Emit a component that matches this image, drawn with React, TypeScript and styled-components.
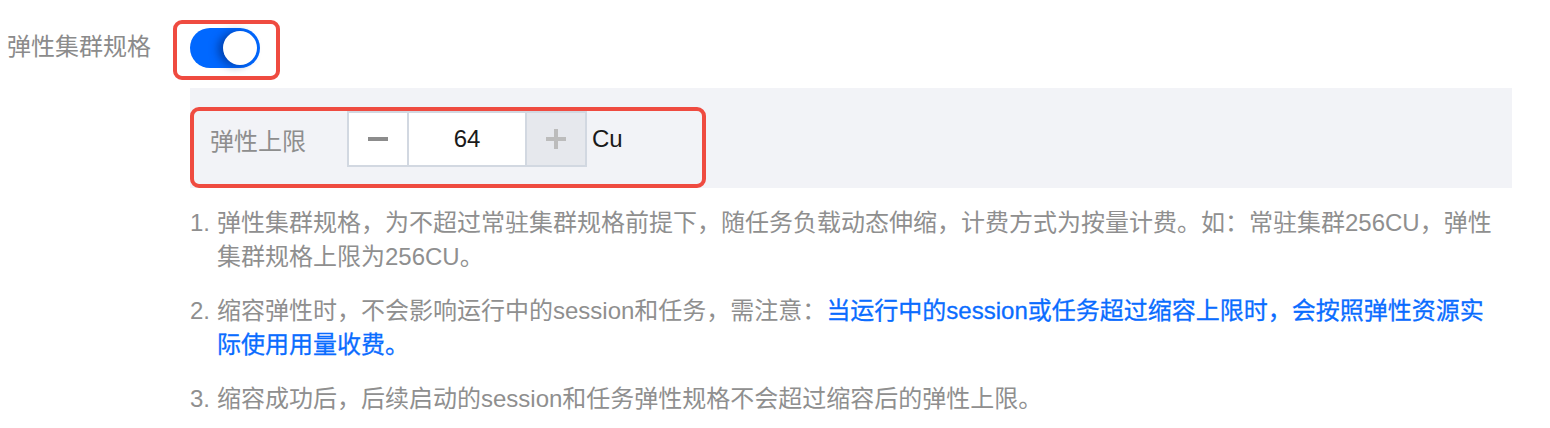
import React, { useState } from 'react';
import styled, { createGlobalStyle } from 'styled-components';

const GlobalStyle = createGlobalStyle`
  html, body {
    margin: 0;
    padding: 0;
    background: #ffffff;
  }
  body {
    font-family: "Liberation Sans", "Noto Sans CJK SC", sans-serif;
  }
`;

interface NotePart {
    text: string;
    highlight?: boolean;
    breakAfter?: boolean;
}

const notes: NotePart[][] = [
    [
        {
            text: '弹性集群规格，为不超过常驻集群规格前提下，随任务负载动态伸缩，计费方式为按量计费。如：常驻集群256CU，弹性',
            breakAfter: true,
        },
        { text: '集群规格上限为256CU。' },
    ],
    [
        { text: '缩容弹性时，不会影响运行中的session和任务，需注意：' },
        { text: '当运行中的session或任务超过缩容上限时，会按照弹性资源实', highlight: true, breakAfter: true },
        { text: '际使用用量收费。', highlight: true },
    ],
    [{ text: '缩容成功后，后续启动的session和任务弹性规格不会超过缩容后的弹性上限。' }],
];

const ElasticSpec: React.FC = () => {
    const [enabled, setEnabled] = useState(true);
    const [limit, setLimit] = useState(64);
    const max = 64;

    return (
        <Page>
            <GlobalStyle />
            <TopRow>
                <FieldLabel>弹性集群规格</FieldLabel>
                <Highlight $pad="4px 16px 8px 13px">
                    <Toggle $on={enabled} onClick={() => setEnabled((v) => !v)}>
                        <Knob $on={enabled} />
                    </Toggle>
                </Highlight>
            </TopRow>

            <Body>
                <Panel>
                    <Highlight $pad="0 0 17px 16px" $width={516}>
                        <LimitRow>
                            <LimitLabel>弹性上限</LimitLabel>
                            <Stepper>
                                <StepButton onClick={() => setLimit((v) => Math.max(0, v - 1))}>
                                    <Minus />
                                </StepButton>
                                <StepValue>{limit}</StepValue>
                                <StepButton $disabled={limit >= max}>
                                    <Plus />
                                </StepButton>
                            </Stepper>
                            <Unit>Cu</Unit>
                        </LimitRow>
                    </Highlight>
                </Panel>

                <Notes>
                    {notes.map((parts, i) => (
                        <NoteItem key={i}>
                            <NoteIndex>{i + 1}.</NoteIndex>
                            <NoteText>
                                {parts.map((p, j) => (
                                    <React.Fragment key={j}>
                                        {p.highlight ? <Strong>{p.text}</Strong> : p.text}
                                        {p.breakAfter && <br />}
                                    </React.Fragment>
                                ))}
                            </NoteText>
                        </NoteItem>
                    ))}
                </Notes>
            </Body>
        </Page>
    );
};

const Page = styled.div`
  width: 1550px;
  height: 428px;
  overflow: hidden;
  padding-left: 7px;
  box-sizing: border-box;
`;

const TopRow = styled.div`
  display: flex;
  align-items: flex-start;
  padding-top: 20px;
`;

const FieldLabel = styled.div`
  width: 166px;
  margin-top: 11px;
  font-size: 24px;
  line-height: 32px;
  color: #8b8b8b;
  white-space: nowrap;
`;

const Highlight = styled.div<{ $pad: string; $width?: number }>`
  display: inline-flex;
  box-sizing: border-box;
  border: 4px solid #ef4b40;
  border-radius: 9px;
  padding: ${(p) => p.$pad};
  ${(p) => (p.$width ? `width: ${p.$width}px;` : '')}
`;

const Toggle = styled.div<{ $on: boolean }>`
  position: relative;
  width: 70px;
  height: 40px;
  border-radius: 20px;
  background: ${(p) => (p.$on ? '#0068ff' : '#c8ccd4')};
  cursor: pointer;
`;

const Knob = styled.span<{ $on: boolean }>`
  position: absolute;
  top: 3px;
  left: ${(p) => (p.$on ? '33px' : '3px')};
  width: 34px;
  height: 34px;
  border-radius: 50%;
  background: #ffffff;
  box-shadow: -5px 1px 9px rgba(0, 34, 110, 0.55);
`;

const Body = styled.div`
  margin-left: 183px;
  width: 1322px;
`;

const Panel = styled.div`
  margin-top: 8px;
  background: #f2f3f7;
  padding-top: 19px;
  height: 100px;
  box-sizing: border-box;
`;

const LimitRow = styled.div`
  display: flex;
  align-items: center;
`;

const LimitLabel = styled.div`
  width: 137px;
  font-size: 24px;
  color: #8e8e8e;
  white-space: nowrap;
`;

const Stepper = styled.div`
  display: flex;
  height: 56px;
  box-sizing: border-box;
  border: 2px solid #d2d8e1;
`;

const StepButton = styled.div<{ $disabled?: boolean }>`
  width: 58px;
  display: flex;
  align-items: center;
  justify-content: center;
  background: ${(p) => (p.$disabled ? '#e6e8ed' : '#ffffff')};
  color: ${(p) => (p.$disabled ? '#bcbcbc' : '#8c8c8c')};
  cursor: ${(p) => (p.$disabled ? 'not-allowed' : 'pointer')};
  &:first-child {
    border-right: 2px solid #d2d8e1;
  }
  &:last-child {
    border-left: 2px solid #d2d8e1;
  }
`;

const StepValue = styled.div`
  width: 116px;
  display: flex;
  align-items: center;
  justify-content: center;
  background: #ffffff;
  font-size: 24px;
  color: #1a1a1a;
`;

const Minus = styled.span`
  width: 20px;
  height: 4px;
  background: currentColor;
`;

const Plus = styled.span`
  position: relative;
  width: 20px;
  height: 20px;
  &::before,
  &::after {
    content: '';
    position: absolute;
    background: currentColor;
  }
  &::before {
    left: 0;
    top: 8px;
    width: 20px;
    height: 4px;
  }
  &::after {
    left: 8px;
    top: 0;
    width: 4px;
    height: 20px;
  }
`;

const Unit = styled.div`
  margin-left: 5px;
  font-size: 24px;
  color: #1a1a1a;
`;

const Notes = styled.ol`
  list-style: none;
  margin: 18px 0 0;
  padding: 0;
  display: flex;
  flex-direction: column;
  gap: 20px;
`;

const NoteItem = styled.li`
  display: flex;
  font-size: 24px;
  line-height: 34px;
  color: #8f8f8f;
`;

const NoteIndex = styled.span`
  flex: 0 0 27px;
`;

const NoteText = styled.span`
  flex: 1;
`;

const Strong = styled.span`
  color: #0a6cff;
  font-weight: 400;
  -webkit-text-stroke: 0.3px #0a6cff;
`;

export default function App() {
    return <ElasticSpec />;
}
